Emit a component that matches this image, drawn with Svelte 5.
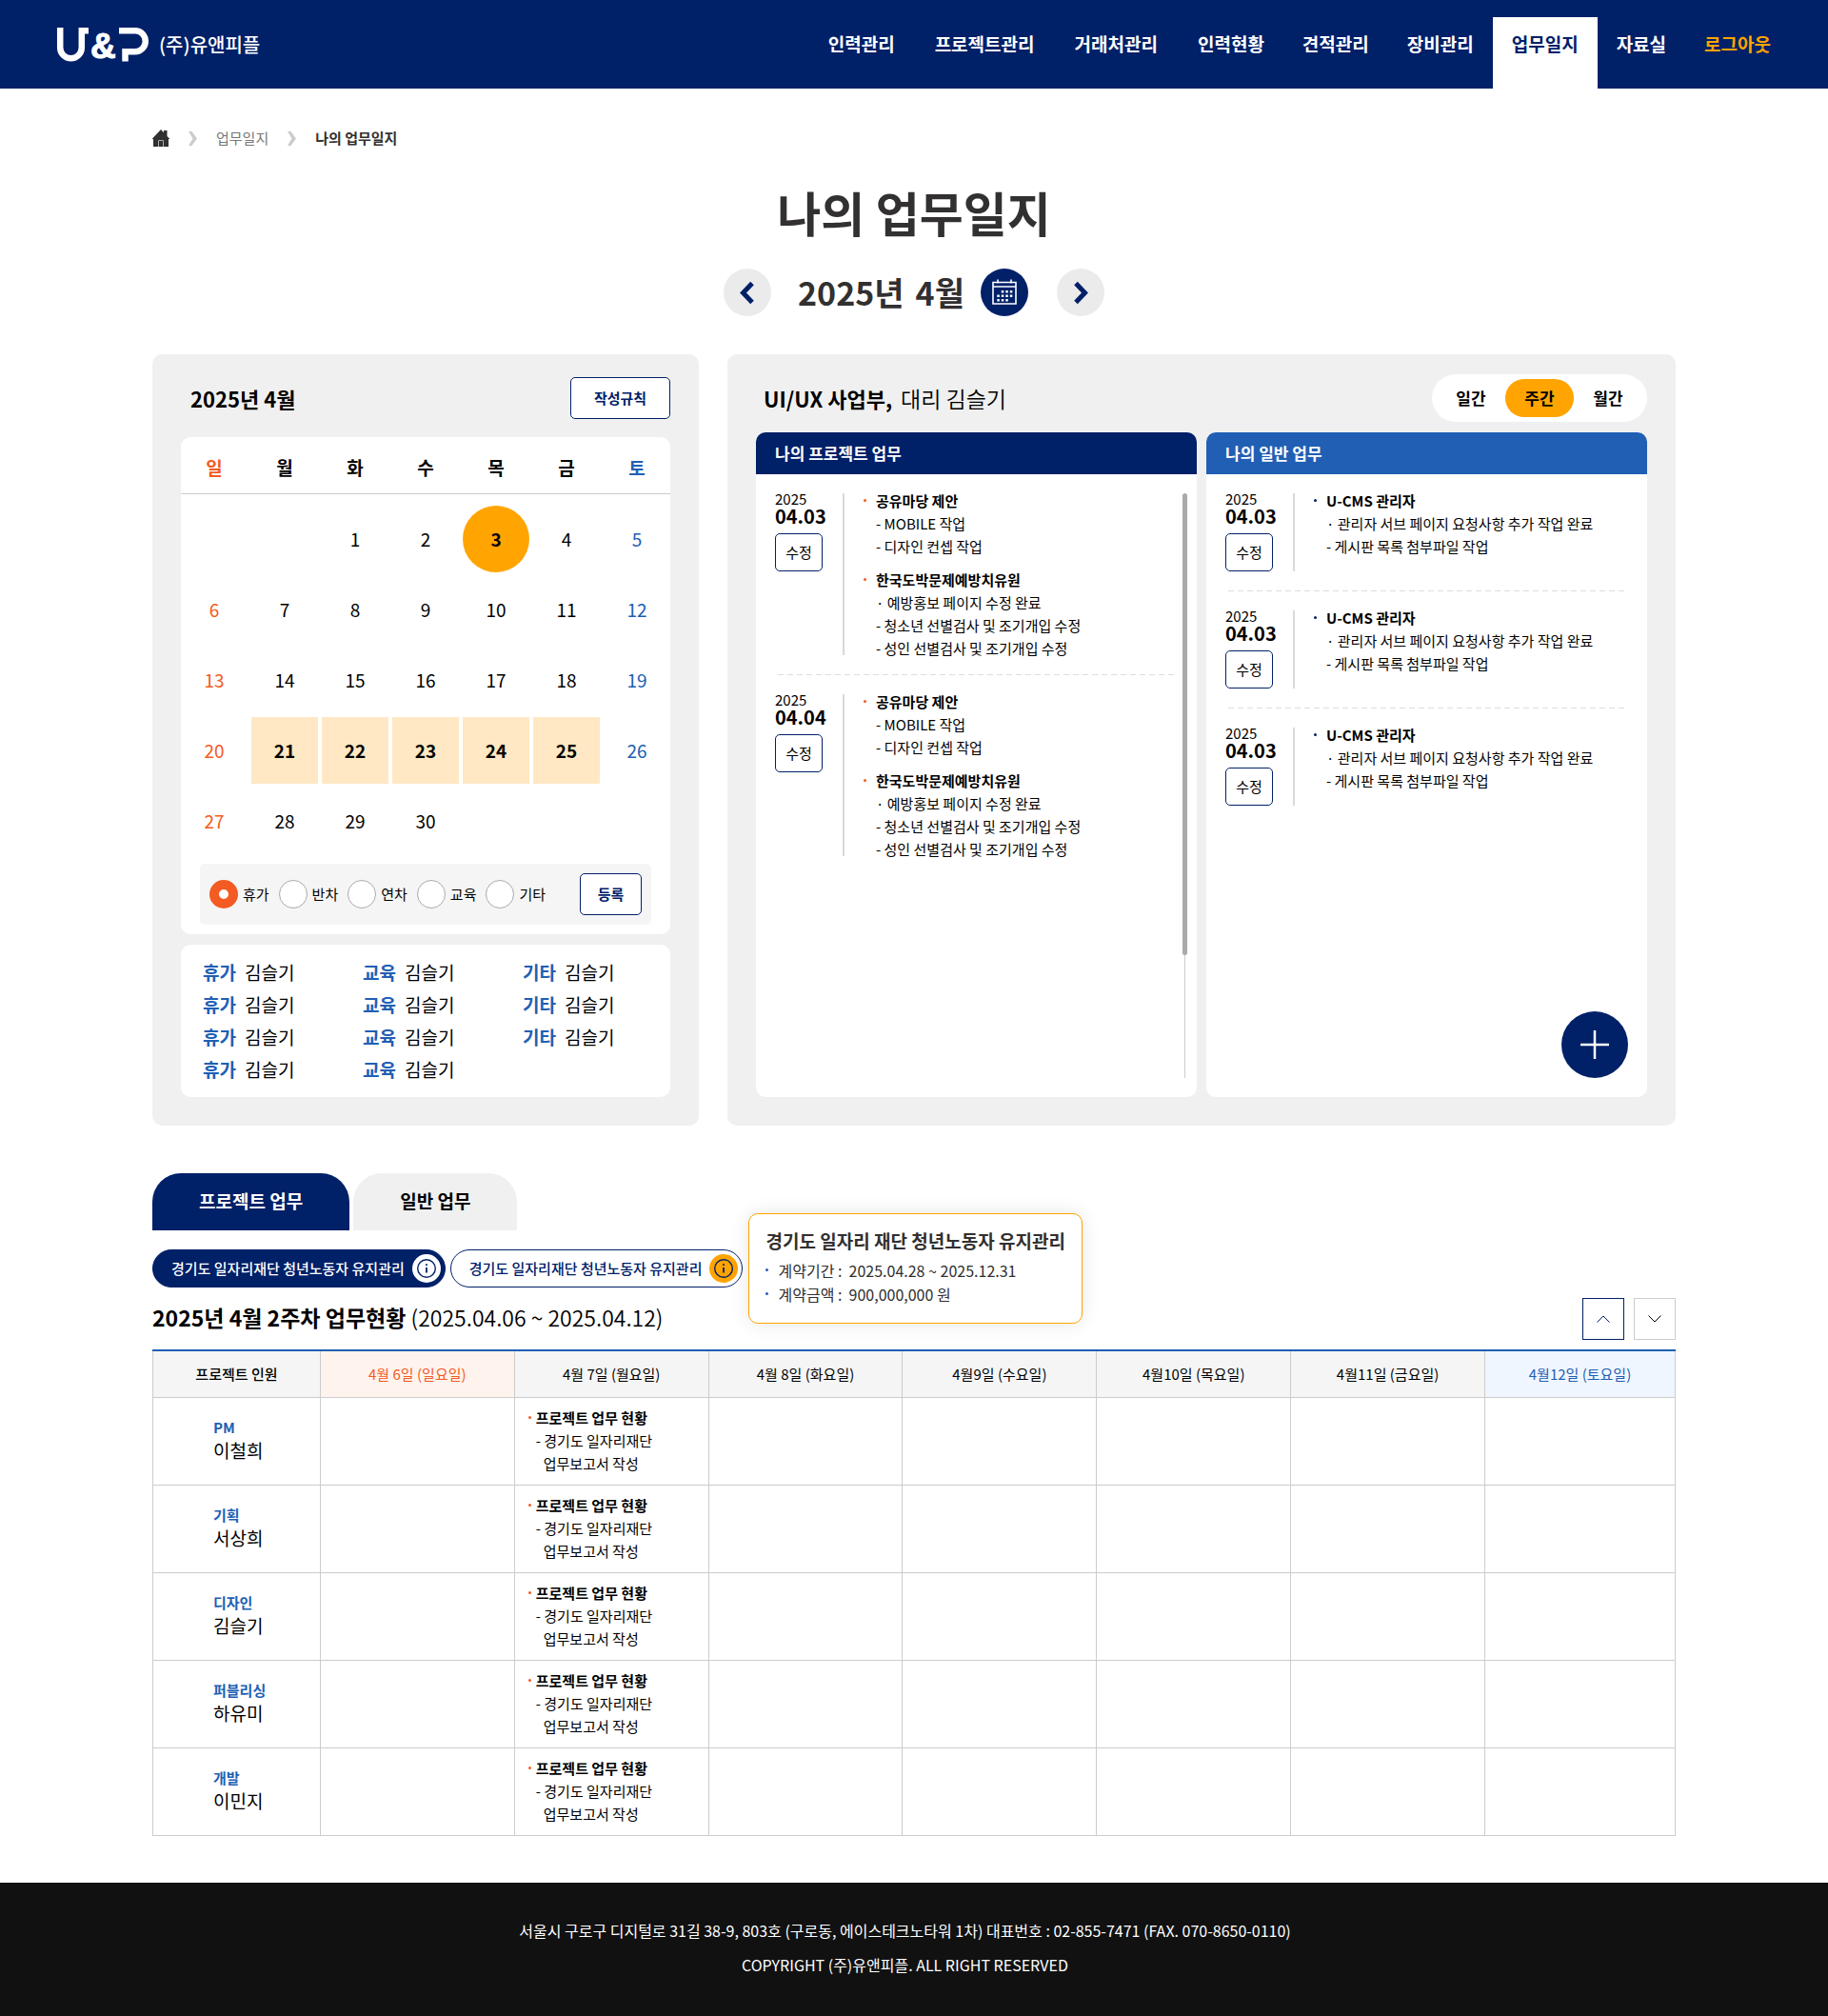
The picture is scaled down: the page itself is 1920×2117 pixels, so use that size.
<script>
  const menu = ['인력관리', '프로젝트관리', '거래처관리', '인력현황', '견적관리', '장비관리', '업무일지', '자료실', '로그아웃'];

  const weekdays = ['일', '월', '화', '수', '목', '금', '토'];
  const weeks = [
    [null, null, 1, 2, 3, 4, 5],
    [6, 7, 8, 9, 10, 11, 12],
    [13, 14, 15, 16, 17, 18, 19],
    [20, 21, 22, 23, 24, 25, 26],
    [27, 28, 29, 30, null, null, null]
  ];
  const today = 3;
  const isPicked = (day) => day >= 21 && day <= 25;

  const leaveTypes = ['휴가', '반차', '연차', '교육', '기타'];
  let leaveType = $state('휴가');

  const members = [
    ['휴가', '교육', '기타'],
    ['휴가', '교육', '기타'],
    ['휴가', '교육', '기타'],
    ['휴가', '교육']
  ].flat();

  const projectTopics = [
    { title: '공유마당 제안', lines: ['- MOBILE 작업', '- 디자인 컨셉 작업'] },
    {
      title: '한국도박문제예방치유원',
      lines: ['· 예방홍보 페이지 수정 완료', '- 청소년 선별검사 및 조기개입 수정', '- 성인 선별검사 및 조기개입 수정']
    }
  ];
  const generalTopics = [
    { title: 'U-CMS 관리자', lines: ['· 관리자 서브 페이지 요청사항 추가 작업 완료', '- 게시판 목록 첨부파일 작업'] }
  ];
  const projectLogs = [
    { date: '04.03', topics: projectTopics },
    { date: '04.04', topics: projectTopics }
  ];
  const generalLogs = [
    { date: '04.03', topics: generalTopics },
    { date: '04.03', topics: generalTopics },
    { date: '04.03', topics: generalTopics }
  ];

  const ranges = ['일간', '주간', '월간'];
  let range = $state('주간');

  const projectName = '경기도 일자리재단 청년노동자 유지관리';
  const days = [
    '4월 6일 (일요일)', '4월 7일 (월요일)', '4월 8일 (화요일)', '4월9일 (수요일)',
    '4월10일 (목요일)', '4월11일 (금요일)', '4월12일 (토요일)'
  ];
  const staff = [
    { role: 'PM', name: '이철희' },
    { role: '기획', name: '서상희' },
    { role: '디자인', name: '김슬기' },
    { role: '퍼블리싱', name: '하유미' },
    { role: '개발', name: '이민지' }
  ];
</script>

{#snippet logList(logs)}
  {#each logs as log}
    <article class="log">
      <div class="when">
        <span class="year">2025</span>
        <strong>{log.date}</strong>
        <button type="button" class="edit">수정</button>
      </div>
      <div class="topics">
        {#each log.topics as topic}
          <section>
            <h4>{topic.title}</h4>
            {#each topic.lines as line}
              <p>{line}</p>
            {/each}
          </section>
        {/each}
      </div>
    </article>
  {/each}
{/snippet}

{#snippet infoIcon()}
  <svg viewBox="0 0 30 30" aria-hidden="true">
    <circle cx="15" cy="15" r="9.3" fill="none" stroke="currentColor" stroke-width="1.4" />
    <path d="M15 14v5.5M15 10.2v1.8" stroke="currentColor" stroke-width="1.8" />
  </svg>
{/snippet}

<header class="top">
  <a class="logo" href="#home" aria-label="U&P (주)유앤피플">
    <svg viewBox="0 0 96 36" aria-hidden="true">
      <path d="M3.2 0V21a11.3 11.3 0 0 0 22.6 0V3.3H33" />
      <path d="M65 3.3H82a10.8 11 0 0 1 0 22H71.5V35.5" />
      <text x="35" y="32">&amp;</text>
    </svg>
    <span>(주)유앤피플</span>
  </a>
  <nav>
    {#each menu as item}
      <a href="#{item}" class:active={item === '업무일지'} class:logout={item === '로그아웃'}>{item}</a>
    {/each}
  </nav>
</header>

<main>
  <nav class="crumbs" aria-label="breadcrumb">
    <a href="#home" aria-label="홈">
      <svg class="home" viewBox="0 0 18 18"><path d="M9 0 12 3.200V1h3.500v6L18 9.500V10h-1v8H1v-8H0V9.500z" /><path class="door" d="M6.500 18v-6.500h5V18" /></svg>
    </a>
    <svg class="sep" viewBox="0 0 9 15"><path d="M0 0h3.500L9 7.500 3.500 15H0l4.500-7.500z" /></svg>
    <a href="#log">업무일지</a>
    <svg class="sep" viewBox="0 0 9 15"><path d="M0 0h3.500L9 7.500 3.500 15H0l4.500-7.500z" /></svg>
    <strong>나의 업무일지</strong>
  </nav>

  <h1>나의 업무일지</h1>

  <div class="month">
    <button type="button" class="round" aria-label="이전 달">
      <svg viewBox="0 0 50 50"><path d="M30 15.500 20.500 25.500 30 35.500" /></svg>
    </button>
    <strong><span>2025년</span><span>4월</span></strong>
    <button type="button" class="round pick" aria-label="달력 열기">
      <svg viewBox="0 0 50 50">
        <path class="frame" d="M13 14.500h24v22.500H13zM13 19h24M18 11.500v4M32 11.500v4" />
        <path class="dots" d="M21.800 24.200h12M17.300 28.700h16.500M17.300 33.200h12" />
      </svg>
    </button>
    <button type="button" class="round" aria-label="다음 달">
      <svg viewBox="0 0 50 50"><path d="M20 15.500 29.500 25.500 20 35.500" /></svg>
    </button>
  </div>

  <div class="panels">
    <section class="panel">
      <div class="panel-head indent">
        <h2>2025년 4월</h2>
        <button type="button" class="line-btn rules">작성규칙</button>
      </div>
      <div class="card">
        <table class="calendar">
          <thead>
            <tr>{#each weekdays as name}<th scope="col">{name}</th>{/each}</tr>
          </thead>
          <tbody>
            {#each weeks as week}
              <tr>
                {#each week as day}
                  <td>
                    {#if day}
                      <button type="button" class:today={day === today} class:picked={isPicked(day)}>{day}</button>
                    {/if}
                  </td>
                {/each}
              </tr>
            {/each}
          </tbody>
        </table>
        <form class="leave">
          {#each leaveTypes as type}
            <label><input type="radio" name="leave" value={type} bind:group={leaveType} />{type}</label>
          {/each}
          <button type="button" class="line-btn">등록</button>
        </form>
      </div>
      <ul class="card members">
        {#each members as kind}
          <li><b>{kind}</b>김슬기</li>
        {/each}
      </ul>
    </section>

    <section class="panel work">
      <div class="panel-head">
        <h2>UI/UX 사업부, <span>대리 김슬기</span></h2>
        <div class="toggle">
          {#each ranges as name}
            <button type="button" class:on={range === name} onclick={() => (range = name)}>{name}</button>
          {/each}
        </div>
      </div>
      <div class="boards">
        <section class="board project">
          <h3>나의 프로젝트 업무</h3>
          <div class="logs">
            <div>{@render logList(projectLogs)}</div>
            <div class="track"><div class="thumb"></div></div>
          </div>
        </section>
        <section class="board general">
          <h3>나의 일반 업무</h3>
          <div class="logs">
            <div>{@render logList(generalLogs)}</div>
          </div>
          <button type="button" class="add" aria-label="업무 추가">
            <svg viewBox="0 0 30 30"><path d="M15 0v30M0 15h30" /></svg>
          </button>
        </section>
      </div>
    </section>
  </div>

  <div class="tabs">
    <button type="button" class="on">프로젝트 업무</button>
    <button type="button">일반 업무</button>
  </div>

  <div class="pills">
    <div class="pill on">
      <a href="#project-1">{projectName}</a>
      <button type="button" aria-label="프로젝트 정보">{@render infoIcon()}</button>
    </div>
    <div class="pill">
      <a href="#project-2">{projectName}</a>
      <button type="button" aria-label="프로젝트 정보">{@render infoIcon()}</button>
      <div class="tip" role="tooltip">
        <strong>경기도 일자리 재단 청년노동자 유지관리</strong>
        <ul>
          <li>계약기간 :&nbsp; 2025.04.28 ~ 2025.12.31</li>
          <li>계약금액 :&nbsp; 900,000,000 원</li>
        </ul>
      </div>
    </div>
  </div>

  <div class="status-head">
    <h2>2025년 4월 2주차 업무현황 <span>(2025.04.06 ~ 2025.04.12)</span></h2>
    <div class="steps">
      <button type="button" class="up" aria-label="이전 주"><svg viewBox="0 0 14 8"><path d="M.5 7.500 7 1l6.500 6.500" /></svg></button>
      <button type="button" aria-label="다음 주"><svg viewBox="0 0 14 8"><path d="M.5.5 7 7 13.500.5" /></svg></button>
    </div>
  </div>

  <table class="status">
    <colgroup>
      <col class="who" />
      {#each days as _, i}<col class:day={i < days.length - 1} />{/each}
    </colgroup>
    <thead>
      <tr>
        <th scope="col" class="people">프로젝트 인원</th>
        {#each days as day}<th scope="col">{day}</th>{/each}
      </tr>
    </thead>
    <tbody>
      {#each staff as person}
        <tr>
          <th scope="row"><b>{person.role}</b><span>{person.name}</span></th>
          {#each days as _, i}
            <td>
              {#if i === 1}
                <h4>프로젝트 업무 현황</h4>
                <p>- 경기도 일자리재단</p>
                <p class="next">업무보고서 작성</p>
              {/if}
            </td>
          {/each}
        </tr>
      {/each}
    </tbody>
  </table>
</main>

<footer>
  <p>서울시 구로구 디지털로 31길 38-9, 803호 (구로동, 에이스테크노타워 1차) 대표번호 : 02-855-7471 (FAX. 070-8650-0110)</p>
  <p>COPYRIGHT (주)유앤피플. ALL RIGHT RESERVED</p>
</footer>

<style>
  :global(body) {
    --navy: #002068;
    --blue: #205fb4;
    --orange: #f35b22;
    --amber: #ffa400;
    --gray: #f0f0f0;
    --rule: #ccc;
    background: #fff;
    color: #000;
    font: 15px/24px 'Noto Sans CJK KR', 'Noto Sans', sans-serif;
  }
  :global(*) {
    box-sizing: border-box;
  }
  h1, h2, h3, h4, p, ul {
    margin: 0;
    padding: 0;
    list-style: none;
  }
  a {
    color: inherit;
    text-decoration: none;
  }
  button {
    padding: 0;
    border: 0;
    background: none;
    color: inherit;
    font: inherit;
    cursor: pointer;
  }
  svg {
    display: block;
  }

  .top {
    display: flex;
    justify-content: space-between;
    align-items: flex-end;
    min-height: 93px;
    padding: 0 40px 0 60px;
    background: var(--navy);
    color: #fff;
  }
  .logo {
    display: flex;
    align-items: center;
    gap: 11px;
    height: 93px;
    font-size: 20px;
    font-weight: 500;
  }
  .logo svg {
    width: 96px;
    height: 36px;
    overflow: visible;
    fill: none;
    stroke: #fff;
    stroke-width: 6.5;
  }
  .logo text {
    fill: #fff;
    stroke-width: 1;
    font: bold 37px 'Liberation Sans', sans-serif;
  }
  .top nav {
    display: flex;
    font-size: 19px;
    font-weight: 700;
  }
  .top nav a {
    height: 75px;
    padding: 0 20px;
    line-height: 55px;
  }
  .top nav a:nth-child(-n + 3) {
    margin-right: 2px;
  }
  .top nav .active {
    background: #fff;
    color: var(--navy);
  }
  .top nav .logout {
    color: var(--amber);
  }

  main {
    max-width: 1640px;
    margin: 0 auto;
    padding: 40px 20px 49px;
  }
  .crumbs {
    display: flex;
    align-items: center;
    gap: 20px;
    color: #777;
  }
  .crumbs strong {
    color: #323030;
    font-weight: 700;
  }
  .home {
    width: 18px;
    height: 18px;
    fill: #323030;
  }
  .home .door {
    fill: none;
    stroke: #aaa;
  }
  .sep {
    width: 9px;
    height: 15px;
    fill: #ccc;
  }
  h1 {
    padding-top: 31px;
    color: #323030;
    font-size: 50px;
    line-height: 68px;
    font-weight: 700;
    text-align: center;
  }
  .month {
    display: flex;
    justify-content: center;
    align-items: center;
    padding: 26px 0 40px;
    color: #323030;
  }
  .month strong {
    display: flex;
    gap: 12px;
    margin: 0 17px 0 28px;
    font-size: 34px;
    line-height: 50px;
    font-weight: 700;
  }
  .round {
    width: 50px;
    height: 50px;
    border-radius: 50%;
    background: #ebebeb;
  }
  .round path {
    fill: none;
    stroke: var(--navy);
    stroke-width: 5;
  }
  .round.pick {
    margin-right: 30px;
    background: var(--navy);
  }
  .pick .frame {
    stroke: #fff;
    stroke-width: 1.6;
  }
  .pick .dots {
    stroke: #fff;
    stroke-width: 2.5;
    stroke-dasharray: 2.5 2;
  }

  .panels {
    display: grid;
    grid-template-columns: minmax(0, 574fr) minmax(0, 996fr);
    gap: 30px;
  }
  .panel {
    display: flex;
    flex-direction: column;
    padding: 20px 30px 30px;
    border-radius: 10px;
    background: var(--gray);
  }
  .panel-head {
    display: flex;
    justify-content: space-between;
    align-items: center;
    min-height: 52px;
    margin-bottom: 10px;
    padding-left: 8px;
  }
  .panel-head.indent {
    margin-bottom: 15px;
    padding-left: 10px;
  }
  h2 {
    font-size: 23px;
    line-height: 34px;
    font-weight: 700;
  }
  .panel-head h2 {
    font-size: 22px;
  }
  h2 span {
    font-size: 23px;
    font-weight: 350;
  }
  .work h2 span {
    margin-left: 4px;
  }
  .line-btn {
    width: 65px;
    height: 44px;
    border: 1px solid var(--navy);
    border-radius: 5px;
    background: #fff;
    color: var(--navy);
    font-weight: 700;
  }
  .rules {
    width: 105px;
  }
  .card {
    padding: 0 0 10px;
    border-radius: 10px;
    background: #fff;
  }
  .calendar {
    display: block;
    font-size: 19px;
  }
  .calendar thead,
  .calendar tbody {
    display: block;
  }
  .calendar tr {
    display: grid;
    grid-template-columns: repeat(7, 1fr);
    gap: 4px;
  }
  .calendar thead {
    border-bottom: 1px solid var(--rule);
  }
  .calendar th {
    padding: 5px 0 0;
    line-height: 54px;
    font-weight: 700;
  }
  .calendar tbody {
    padding: 12px 0 10px;
  }
  .calendar tbody tr + tr {
    margin-top: 4px;
  }
  .calendar td {
    height: 70px;
    padding: 0;
  }
  .calendar button {
    display: block;
    width: 70px;
    height: 70px;
    margin: 0 auto;
  }
  .calendar tr > :first-child {
    color: var(--orange);
  }
  .calendar tr > :last-child {
    color: var(--blue);
  }
  .calendar .today {
    border-radius: 50%;
    background: var(--amber);
    font-weight: 700;
  }
  .calendar .picked {
    width: 100%;
    background: #ffe8c3;
    font-weight: 700;
  }
  .leave {
    display: flex;
    align-items: center;
    gap: 10px;
    margin: 0 20px;
    padding: 10px;
    border-radius: 5px;
    background: #f5f5f5;
  }
  .leave label {
    display: flex;
    align-items: center;
    gap: 5px;
  }
  .leave input {
    appearance: none;
    width: 30px;
    height: 30px;
    margin: 0;
    border: 1px solid #aaa;
    border-radius: 50%;
    background: #fff;
  }
  .leave input:checked {
    border: 10px solid var(--orange);
  }
  .leave .line-btn {
    margin-left: auto;
  }
  .members {
    flex: 1;
    display: grid;
    grid-template-columns: repeat(3, minmax(0, 1fr));
    column-gap: 13px;
    align-content: start;
    margin-top: 11px;
    padding: 12px 0 12px 23px;
    font-size: 19px;
    line-height: 34px;
  }
  .members b {
    margin-right: 9px;
    color: var(--blue);
    font-weight: 700;
  }

  .toggle {
    display: flex;
    padding: 5px;
    border-radius: 25px;
    background: #fff;
    font-size: 17px;
    font-weight: 700;
  }
  .toggle button {
    width: 72px;
    height: 40px;
    border-radius: 20px;
  }
  .toggle .on {
    background: var(--amber);
  }
  .boards {
    flex: 1;
    display: grid;
    grid-template-columns: 1fr 1fr;
    gap: 10px;
  }
  .board {
    position: relative;
    display: flex;
    flex-direction: column;
    border-radius: 10px;
    background: #fff;
  }
  .board h3 {
    padding: 0 20px;
    border-radius: 10px 10px 0 0;
    background: var(--navy);
    color: #fff;
    font-size: 17px;
    line-height: 44px;
    font-weight: 700;
  }
  .general h3 {
    background: var(--blue);
  }
  .logs {
    flex: 1;
    display: flex;
    gap: 4px;
    padding: 20px 10px 20px 20px;
  }
  .logs > :first-child {
    flex: 1;
  }
  .general .logs {
    padding-right: 20px;
  }
  .track {
    width: 5px;
    background: linear-gradient(var(--rule), var(--rule)) center / 1px 100% no-repeat;
  }
  .thumb {
    height: 79%;
    border-radius: 3px;
    background: #aaa;
  }
  .log {
    display: grid;
    grid-template-columns: 71px 1fr;
  }
  .log + .log {
    margin-top: 20px;
    padding-top: 21px;
    background: repeating-linear-gradient(90deg, #ddd 0 6px, transparent 6px 10px) 3px 0 / calc(100% - 6px) 1px no-repeat;
  }
  .when {
    display: flex;
    flex-direction: column;
    align-items: flex-start;
    line-height: 12px;
  }
  .when strong {
    font-size: 20px;
    line-height: 24px;
    font-weight: 700;
  }
  .edit {
    width: 50px;
    height: 40px;
    margin-top: 6px;
    border: 1px solid var(--navy);
    border-radius: 5px;
    background: #fff;
  }
  .topics {
    border-left: 2px solid #d9d9d9;
    padding-left: 33px;
  }
  .topics section:first-child {
    margin-top: -4px;
  }
  .topics section:last-child {
    margin-bottom: -5px;
  }
  .topics section + section {
    margin-top: 11px;
  }
  h4 {
    position: relative;
    font-size: 15px;
    font-weight: 700;
  }
  h4::before,
  .tip li::before {
    content: '';
    position: absolute;
    top: 10px;
    left: -13px;
    width: 3px;
    height: 3px;
    border-radius: 50%;
    background: var(--orange);
  }
  .general h4::before {
    background: var(--navy);
  }
  .add {
    position: absolute;
    right: 20px;
    bottom: 20px;
    display: grid;
    place-items: center;
    width: 70px;
    height: 70px;
    border-radius: 50%;
    background: var(--navy);
  }
  .add svg {
    width: 30px;
    stroke: #fff;
    stroke-width: 2.5;
  }

  .tabs {
    display: flex;
    gap: 4px;
    margin-top: 50px;
    font-size: 19px;
    font-weight: 700;
  }
  .tabs button {
    height: 60px;
    padding: 0 49px 2px;
    border-radius: 30px 30px 0 0;
    background: var(--gray);
  }
  .tabs .on {
    background: var(--navy);
    color: #fff;
  }
  .pills {
    display: flex;
    gap: 5px;
    margin-top: 20px;
  }
  .pill {
    position: relative;
    display: flex;
    align-items: center;
    gap: 8px;
    height: 40px;
    padding: 0 4px 0 19px;
    border: 1px solid var(--navy);
    border-radius: 20px;
    color: var(--navy);
    font-weight: 500;
  }
  .pill.on {
    background: var(--navy);
    color: #fff;
  }
  .pill button {
    width: 30px;
    height: 30px;
    border-radius: 50%;
    background: var(--amber);
    color: var(--navy);
  }
  .pill.on button {
    background: #fff;
  }
  .tip {
    position: absolute;
    left: calc(100% + 7px);
    top: -39px;
    padding: 14px 17px 17px;
    border: 1px solid var(--amber);
    border-radius: 10px;
    background: #fff;
    box-shadow: 0 0 20px rgb(0 0 0 / 10%);
    color: #323030;
    font-size: 16px;
    line-height: 25px;
    font-weight: 400;
    white-space: nowrap;
  }
  .tip strong {
    display: block;
    margin-bottom: 5px;
    font-size: 19px;
    line-height: 28px;
    font-weight: 700;
  }
  .tip li {
    position: relative;
    padding-left: 13px;
  }
  .tip li::before {
    left: 0;
    background: var(--blue);
  }

  .status-head {
    display: flex;
    justify-content: space-between;
    align-items: center;
    margin: 11px 0 10px;
  }
  .status-head h2 {
    padding-bottom: 4px;
  }
  .steps {
    display: flex;
    gap: 10px;
  }
  .steps button {
    display: grid;
    place-items: center;
    width: 44px;
    height: 44px;
    border: 1px solid var(--rule);
    background: #fff;
  }
  .steps .up {
    border-color: var(--navy);
    color: var(--navy);
  }
  .steps svg {
    width: 14px;
    fill: none;
    stroke: currentColor;
  }
  .status {
    width: 100%;
    table-layout: fixed;
    border-collapse: collapse;
    border-top: 2px solid var(--blue);
  }
  .who {
    width: 11%;
  }
  .day {
    width: 12.75%;
  }
  .status th,
  .status td {
    height: 92px;
    padding: 0;
    border: 1px solid var(--rule);
    text-align: left;
    vertical-align: middle;
  }
  .status thead th {
    height: 49px;
    border-top: 2px solid var(--blue);
    background: #f5f5f5;
    font-weight: 400;
    text-align: center;
  }
  .status thead .people {
    font-weight: 500;
  }
  .status thead th:nth-child(2) {
    background: #fff3ee;
    color: var(--orange);
  }
  .status thead th:last-child {
    background: #f0f6ff;
    color: var(--blue);
  }
  .status tbody th {
    padding: 0 0 2px 63px;
    font-weight: 400;
  }
  .status tbody th b {
    display: block;
    color: var(--blue);
    font-weight: 700;
  }
  .status tbody th span {
    font-size: 19px;
  }
  .status td {
    padding-left: 22px;
  }
  .status h4::before {
    left: -8px;
  }
  .status .next {
    padding-left: 8px;
  }

  footer {
    padding: 32px 19px 36px 0;
    background: #111;
    color: #fff;
    font-size: 16px;
    line-height: 36px;
    text-align: center;
  }
</style>
